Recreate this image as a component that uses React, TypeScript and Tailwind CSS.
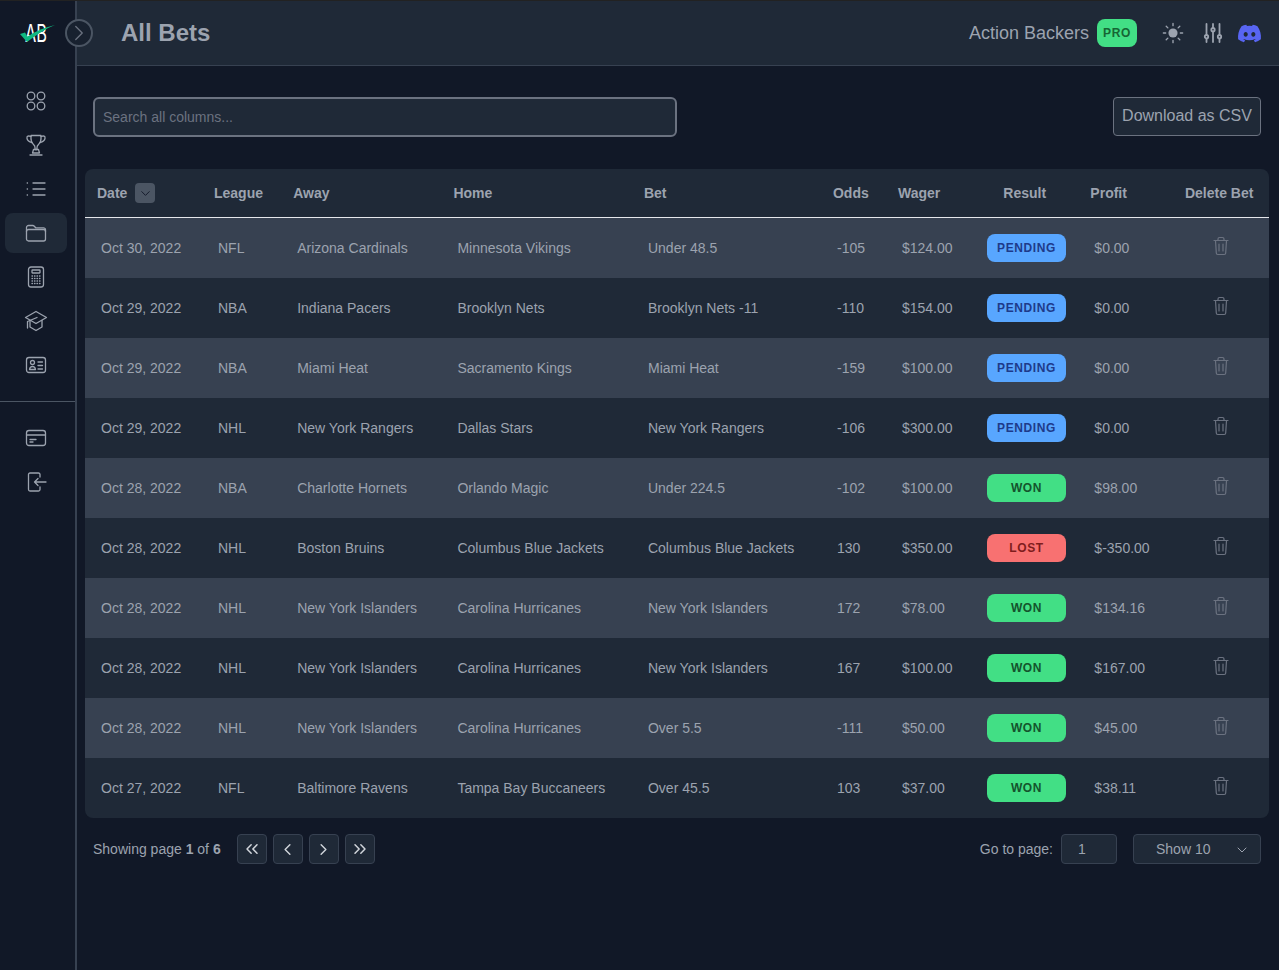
import { ChevronDown, ChevronLeft, ChevronRight, ChevronsLeft, ChevronsRight } from "lucide-react"
import { FaDiscord } from "react-icons/fa"

type Result = "PENDING" | "WON" | "LOST"

interface Bet {
  date: string
  league: string
  away: string
  home: string
  bet: string
  odds: string
  wager: string
  result: Result
  profit: string
}

const bets: Bet[] = [
  { date: "Oct 30, 2022", league: "NFL", away: "Arizona Cardinals", home: "Minnesota Vikings", bet: "Under 48.5", odds: "-105", wager: "$124.00", result: "PENDING", profit: "$0.00" },
  { date: "Oct 29, 2022", league: "NBA", away: "Indiana Pacers", home: "Brooklyn Nets", bet: "Brooklyn Nets -11", odds: "-110", wager: "$154.00", result: "PENDING", profit: "$0.00" },
  { date: "Oct 29, 2022", league: "NBA", away: "Miami Heat", home: "Sacramento Kings", bet: "Miami Heat", odds: "-159", wager: "$100.00", result: "PENDING", profit: "$0.00" },
  { date: "Oct 29, 2022", league: "NHL", away: "New York Rangers", home: "Dallas Stars", bet: "New York Rangers", odds: "-106", wager: "$300.00", result: "PENDING", profit: "$0.00" },
  { date: "Oct 28, 2022", league: "NBA", away: "Charlotte Hornets", home: "Orlando Magic", bet: "Under 224.5", odds: "-102", wager: "$100.00", result: "WON", profit: "$98.00" },
  { date: "Oct 28, 2022", league: "NHL", away: "Boston Bruins", home: "Columbus Blue Jackets", bet: "Columbus Blue Jackets", odds: "130", wager: "$350.00", result: "LOST", profit: "$-350.00" },
  { date: "Oct 28, 2022", league: "NHL", away: "New York Islanders", home: "Carolina Hurricanes", bet: "New York Islanders", odds: "172", wager: "$78.00", result: "WON", profit: "$134.16" },
  { date: "Oct 28, 2022", league: "NHL", away: "New York Islanders", home: "Carolina Hurricanes", bet: "New York Islanders", odds: "167", wager: "$100.00", result: "WON", profit: "$167.00" },
  { date: "Oct 28, 2022", league: "NHL", away: "New York Islanders", home: "Carolina Hurricanes", bet: "Over 5.5", odds: "-111", wager: "$50.00", result: "WON", profit: "$45.00" },
  { date: "Oct 27, 2022", league: "NFL", away: "Baltimore Ravens", home: "Tampa Bay Buccaneers", bet: "Over 45.5", odds: "103", wager: "$37.00", result: "WON", profit: "$38.11" },
]

const badgeStyles: Record<Result, string> = {
  PENDING: "bg-[#58a6ff] text-[#1e3a8a]",
  WON: "bg-[#42df85] text-[#14532d]",
  LOST: "bg-[#f87171] text-[#7f1d1d]",
}

function Svg({ children }: { children: React.ReactNode }) {
  return (
    <svg viewBox="0 0 24 24" className="w-6 h-6" fill="none" stroke="currentColor" strokeWidth="1.3" strokeLinecap="round" strokeLinejoin="round">
      {children}
    </svg>
  )
}

const GridIcon = () => (
  <Svg>
    <circle cx="7" cy="7" r="3.8" />
    <circle cx="17" cy="7" r="3.8" />
    <circle cx="7" cy="17" r="3.8" />
    <circle cx="17" cy="17" r="3.8" />
  </Svg>
)

const TrophyIcon = () => (
  <Svg>
    <path d="M7 2.500h10c0 0 .5 6.500-2.500 9-1.500 1.200-1.500 1.500-1.500 3v2h-2v-2c0-1.500 0-1.800-1.500-3-3-2.500-2.500-9-2.500-9z" />
    <path d="M7 3.500C4.500 2.500 2.500 3 3 5.500c.5 2.300 3 3.500 5 4M17 3.500c2.500-1 4.500-.5 4 2-.5 2.300-3 3.500-5 4" />
    <path d="M9.500 16.500h5l1 3.500h-7zM6 22h12" />
  </Svg>
)

const ListIcon = () => (
  <Svg>
    <path d="M9 6h12M9 12h12M9 18h12" />
    <path d="M3.200 6h.3M3.200 12h.3M3.200 18h.3" />
  </Svg>
)

const FolderIcon = () => (
  <Svg>
    <path d="M2.500 18V6.500a2 2 0 0 1 2-2h4.300c.6 0 1.100.3 1.500.7l1.400 1.600H19.500a2 2 0 0 1 2 2V18a2 2 0 0 1-2 2h-15a2 2 0 0 1-2-2z" />
    <path d="M2.500 10.500a2 2 0 0 1 2-2h15a2 2 0 0 1 2 2" />
  </Svg>
)

const CalculatorIcon = () => (
  <Svg>
    <rect x="4.500" y="2" width="15" height="20" rx="2.500" />
    <rect x="8" y="5" width="8" height="3" rx=".5" />
    <path d="M8 11h.5M10.500 11h.5M13 11h.5M15.500 11h.5M8 13.500h.5M10.500 13.500h.5M13 13.500h.5M15.500 13.500h.5M8 16h.5M10.500 16h.5M13 16h.5M15.500 16h.5M8 18.500h.5M10.500 18.500h.5M13 18.500h.5M15.500 18.500h.5" />
  </Svg>
)

const CapIcon = () => (
  <Svg>
    <path d="M12 2.500l10.500 6-10.500 6-10.500-6z" />
    <path d="M6 11.500v6.500l6 3.500 6-3.500v-6.500" />
    <path d="M13 8.500L3.500 12.500V19" />
  </Svg>
)

const IdIcon = () => (
  <Svg>
    <rect x="2.500" y="4.500" width="19" height="15" rx="2.500" />
    <circle cx="8.500" cy="9.500" r="2" />
    <path d="M5.500 16.500c.3-2 1.500-3 3-3s2.700 1 3 3zM14 9h4.500M14 12.500h4.500M14 16h4.500" />
  </Svg>
)

const CardIcon = () => (
  <Svg>
    <rect x="2.500" y="4.500" width="19" height="15" rx="2.500" />
    <path d="M2.500 9h19M6 13.500h6M6 16h3" />
  </Svg>
)

const ExitIcon = () => (
  <Svg>
    <path d="M16 7V4.500A1.500 1.500 0 0 0 14.500 3h-8.500A1.500 1.500 0 0 0 4.500 4.500v15A1.500 1.500 0 0 0 6 21h8.500a1.500 1.500 0 0 0 1.500-1.500V17" />
    <path d="M22 12H10.500M10.500 12l3.500-3.500M10.500 12l3.500 3.500" />
  </Svg>
)

const SunIcon = () => (
  <svg viewBox="0 0 24 24" className="w-[22px] h-[22px]" stroke="currentColor" strokeWidth="1.500" strokeLinecap="round">
    <circle cx="12" cy="12" r="5" fill="currentColor" stroke="none" />
    <path d="M12 1.500v2.500M12 20v2.500M1.500 12H4M20 12h2.500M4.600 4.600l1.800 1.800M17.600 17.600l1.800 1.800M4.600 19.400l1.800-1.800M17.600 6.400l1.800-1.800" />
  </svg>
)

const SlidersIcon = () => (
  <svg viewBox="0 0 24 24" className="w-6 h-6" fill="none" stroke="currentColor" strokeWidth="1.800" strokeLinecap="round">
    <path d="M5.500 3v10.500M5.500 18v3M12 3v3.500M12 11v10M18.500 3v10.500M18.500 18v3" />
    <circle cx="5.500" cy="15.700" r="1.700" />
    <circle cx="12" cy="8.700" r="1.700" />
    <circle cx="18.500" cy="15.700" r="1.700" />
  </svg>
)

const TrashIcon = () => (
  <svg viewBox="0 0 16 20" className="w-4 h-5 text-[#6b7280]" fill="none" stroke="currentColor" strokeWidth="1.200" strokeLinecap="round" strokeLinejoin="round">
    <path d="M1 4.500h14M2.500 4.500l.8 12.500a1.500 1.500 0 0 0 1.500 1.500h6.400a1.500 1.500 0 0 0 1.500-1.500l.8-12.500" />
    <path d="M5 4.500V3a1.500 1.500 0 0 1 1.500-1.500h3A1.500 1.500 0 0 1 11 3v1.500M6 8v7M10 8v7" />
  </svg>
)

const topNav = [
  { icon: <GridIcon /> },
  { icon: <TrophyIcon /> },
  { icon: <ListIcon /> },
  { icon: <FolderIcon />, active: true },
  { icon: <CalculatorIcon /> },
  { icon: <CapIcon /> },
  { icon: <IdIcon /> },
]

function NavItem({ icon, active }: { icon: React.ReactNode; active?: boolean }) {
  return (
    <div className={`ml-[5px] w-[62px] h-10 flex items-center justify-center rounded-lg text-[#9ca3af] ${active ? "bg-[#1f2937]" : ""}`}>
      {icon}
    </div>
  )
}

function Sidebar() {
  return (
    <aside className="relative w-[77px] shrink-0 border-r-2 border-[#374151] bg-[#111827]">
      <div className="relative h-[65px]">
        <span className="absolute left-[17px] top-[21px] w-[38px] text-center text-white font-['Inter',sans-serif] text-[24px] font-normal leading-[24px] scale-x-[.68]">AB</span>
        <svg viewBox="0 0 35 17" className="absolute left-[20px] top-[24px] w-[35px] h-[17px]">
          <path d="M0 9l5-1.500 2.500 4C15 6.500 24 2.500 35 0 25 4 16 10 7 17z" fill="#10b981" />
        </svg>
      </div>
      <button className="absolute left-[65px] top-[18px] w-7 h-7 rounded-full border-2 border-[#4b5563] bg-[#18212f] flex items-center justify-center text-[#6b7280] z-10">
        <ChevronRight size={26} strokeWidth={1.200} className="shrink-0" />
      </button>
      <nav className="mt-[15px] flex flex-col gap-1">
        {topNav.map((item, i) => (
          <NavItem key={i} icon={item.icon} active={item.active} />
        ))}
      </nav>
      <div className="mt-4 mb-4 h-px bg-[#4b5563]" />
      <nav className="flex flex-col gap-1">
        <NavItem icon={<CardIcon />} />
        <NavItem icon={<ExitIcon />} />
      </nav>
    </aside>
  )
}

function Header() {
  return (
    <header className="h-[65px] flex items-center bg-[#1f2937] border-b border-[#374151] pl-[44px] pr-[17px]">
      <h1 className="text-2xl font-bold text-[#9ca3af]">All Bets</h1>
      <span className="ml-auto text-lg text-[#9ca3af]">Action Backers</span>
      <span className="ml-2 w-10 h-7 rounded-lg bg-[#42df85] text-[#166534] text-xs font-bold tracking-wider flex items-center justify-center">PRO</span>
      <span className="ml-[25px] text-[#9ca3af]"><SunIcon /></span>
      <span className="ml-[17px] text-[#9ca3af]"><SlidersIcon /></span>
      <span className="ml-3 text-[#5865f2]"><FaDiscord size={25} /></span>
    </header>
  )
}

const columns = [
  { label: "League", width: "w-[79.2px]" },
  { label: "Away", width: "w-[160.2px]" },
  { label: "Home", width: "w-[190.6px]" },
  { label: "Bet", width: "w-[189px]" },
  { label: "Odds", width: "w-[65px]" },
  { label: "Wager", width: "w-[85px]" },
]

function BetsTable() {
  return (
    <div className="ml-2 w-[1184px] rounded-lg overflow-hidden">
      <table className="w-[1184px] table-fixed border-separate border-spacing-0 text-sm text-[#9ca3af]">
        <thead className="bg-[#1f2937]">
          <tr>
            <th className="w-[117px] h-[49px] px-3 text-left font-bold border-b border-[#e5e7eb]">
              <span className="flex items-center gap-2">
                Date
                <span className="w-5 h-5 rounded bg-[#4b5563] flex items-center justify-center text-[#111827]">
                  <ChevronDown size={15} strokeWidth={1.500} />
                </span>
              </span>
            </th>
            {columns.map((c) => (
              <th key={c.label} className={`${c.width} px-3 text-left font-bold border-b border-[#e5e7eb]`}>{c.label}</th>
            ))}
            <th className="w-[107.4px] px-3 text-center font-bold border-b border-[#e5e7eb]">Result</th>
            <th className="w-[94.6px] px-3 text-left font-bold border-b border-[#e5e7eb]">Profit</th>
            <th className="w-[96px] px-3 text-left font-bold border-b border-[#e5e7eb] whitespace-nowrap">Delete Bet</th>
          </tr>
        </thead>
        <tbody>
          {bets.map((b, i) => (
            <tr key={i} className={i % 2 === 0 ? "bg-[#374151]" : "bg-[#1f2937]"}>
              <td className="h-[60px] px-4 whitespace-nowrap">{b.date}</td>
              <td className="px-4">{b.league}</td>
              <td className="px-4 whitespace-nowrap">{b.away}</td>
              <td className="px-4 whitespace-nowrap">{b.home}</td>
              <td className="px-4 whitespace-nowrap">{b.bet}</td>
              <td className="px-4">{b.odds}</td>
              <td className="px-4">{b.wager}</td>
              <td className="px-4">
                <span className={`w-[79px] h-7 rounded-lg flex items-center justify-center text-xs font-bold tracking-wider ${badgeStyles[b.result]}`}>
                  {b.result}
                </span>
              </td>
              <td className="px-4">{b.profit}</td>
              <td className="px-4">
                <span className="flex justify-center mb-1"><TrashIcon /></span>
              </td>
            </tr>
          ))}
        </tbody>
      </table>
    </div>
  )
}

function PageButton({ children }: { children: React.ReactNode }) {
  return (
    <button className="w-[30px] h-[30px] rounded border border-[#374151] bg-[#1f2937] flex items-center justify-center text-[#d1d5db]">
      {children}
    </button>
  )
}

function Pagination() {
  return (
    <div className="mt-4 ml-4 mr-[18px] flex items-center text-sm text-[#9ca3af]">
      <span>Showing page <b>1</b> of <b>6</b></span>
      <div className="ml-4 flex gap-[6px]">
        <PageButton><ChevronsLeft size={20} strokeWidth={1.800} /></PageButton>
        <PageButton><ChevronLeft size={19} strokeWidth={1.800} /></PageButton>
        <PageButton><ChevronRight size={19} strokeWidth={1.800} /></PageButton>
        <PageButton><ChevronsRight size={20} strokeWidth={1.800} /></PageButton>
      </div>
      <span className="ml-auto">Go to page:</span>
      <div className="ml-2 w-14 h-[30px] rounded border border-[#374151] bg-[#1f2937] flex items-center pl-4">1</div>
      <div className="relative ml-4 w-32 h-[30px] rounded border border-[#374151] bg-[#1f2937] flex items-center pl-[22px]">
        Show 10
        <ChevronDown size={16} strokeWidth={1.500} className="absolute right-[10px] top-[7px]" />
      </div>
    </div>
  )
}

export default function App() {
  return (
    <div className="flex h-[970px] overflow-hidden bg-[#111827] border-t border-[#222222] font-['Liberation_Sans',Arial,sans-serif]">
      <Sidebar />
      <main className="flex-1 min-w-0">
        <Header />
        <div className="ml-4 mr-[18px] mt-[31px] mb-8 flex items-start justify-between">
          <input
            placeholder="Search all columns..."
            className="w-[584px] h-10 rounded-md border-2 border-[#6b7280] bg-[#1f2937] px-2 text-sm text-[#9ca3af] placeholder:text-[#6b7280] outline-none"
          />
          <button className="h-[39px] w-[148px] pb-0.5 rounded border border-[#6b7280] bg-[#1f2937] text-base text-[#9ca3af]">Download as CSV</button>
        </div>
        <BetsTable />
        <Pagination />
      </main>
    </div>
  )
}
